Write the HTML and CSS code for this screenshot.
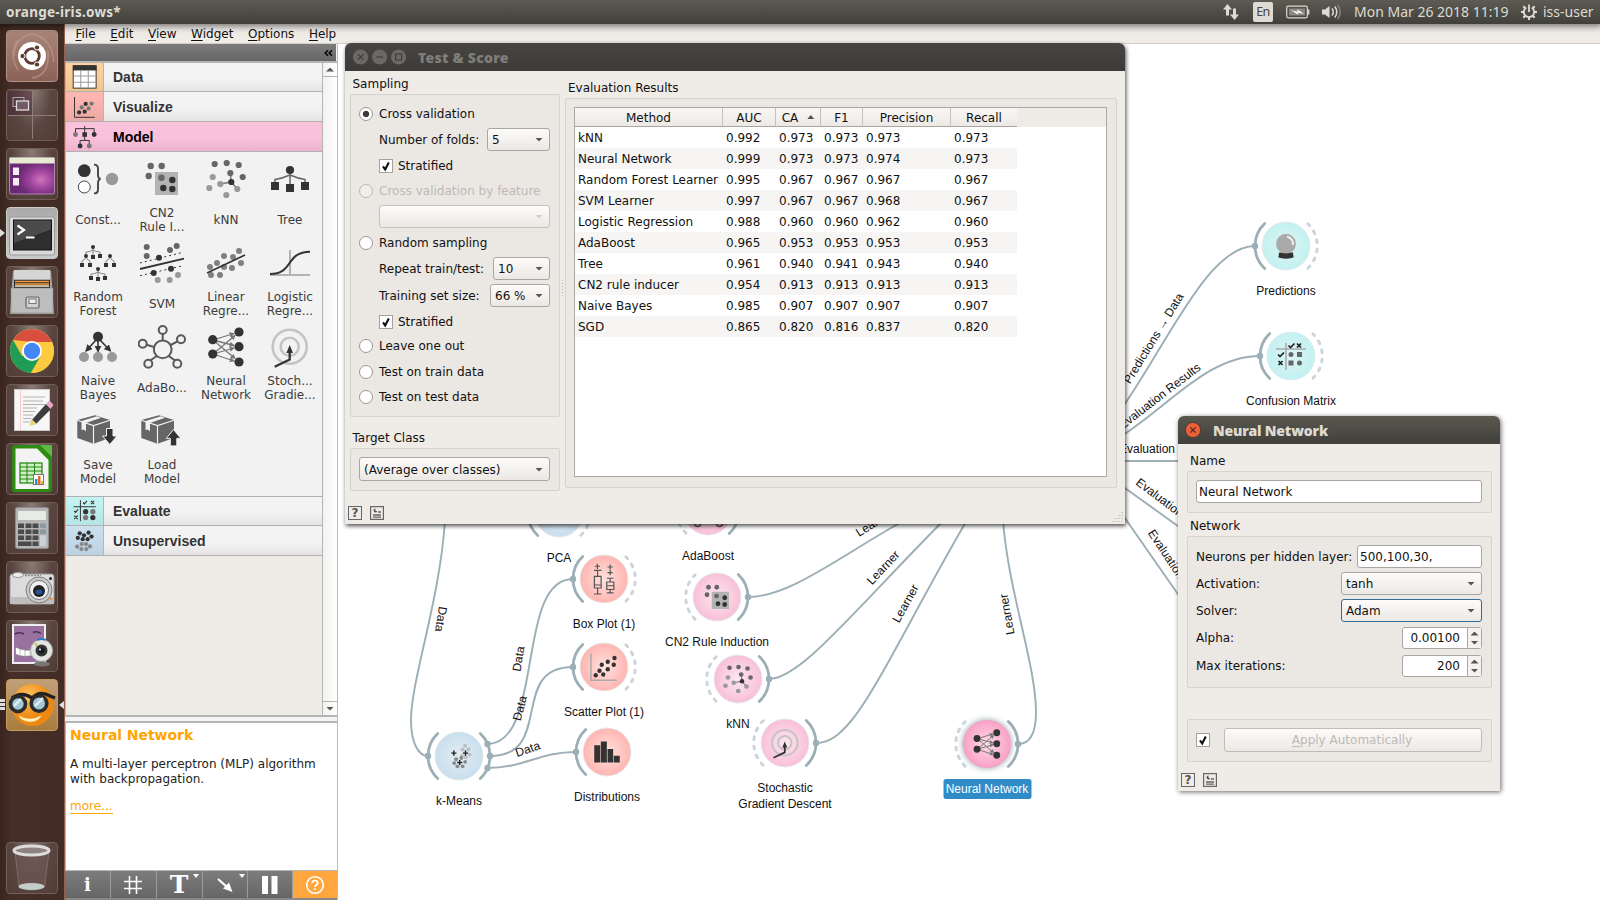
FILE: index.html
```html
<!DOCTYPE html>
<html lang="en">
<head>
<meta charset="utf-8">
<title>orange-iris.ows*</title>
<link rel="stylesheet" href="styles.css">
</head>
<body>
<svg class="defs" width="0" height="0">
  <defs>
    <radialGradient id="gPink"><stop offset="0" stop-color="#fde6ef"/><stop offset="1" stop-color="#f9bfd8"/></radialGradient>
    <radialGradient id="gHot"><stop offset="0" stop-color="#fddbe7"/><stop offset="1" stop-color="#f9a0c5"/></radialGradient>
    <radialGradient id="gRed"><stop offset="0" stop-color="#ffe2df"/><stop offset="1" stop-color="#ffb5b0"/></radialGradient>
    <radialGradient id="gBlue"><stop offset="0" stop-color="#e4edf2"/><stop offset="1" stop-color="#c8dfee"/></radialGradient>
    <radialGradient id="gTeal"><stop offset="0" stop-color="#dcf5f4"/><stop offset="1" stop-color="#c3f1f1"/></radialGradient>
    <marker id="ah" viewBox="0 0 6 6" refX="5" refY="3" markerWidth="4" markerHeight="4" orient="auto"><path d="M0 0L6 3L0 6z" fill="#777"/></marker>
    <marker id="ad" viewBox="0 0 6 6" refX="5" refY="3" markerWidth="4.5" markerHeight="4.5" orient="auto"><path d="M0 0L6 3L0 6z" fill="#333"/></marker>

    <path id="arcR" d="M21.3 -22.5A31 31 0 0 1 21.3 22.5" fill="none" stroke="#9caeb6" stroke-width="2.8" stroke-linecap="round"/>
    <path id="arcL" d="M-21.3 -22.5A31 31 0 0 0 -21.3 22.5" fill="none" stroke="#9caeb6" stroke-width="2.8" stroke-linecap="round"/>
    <path id="dashR" d="M21.8 -22.3A31 31 0 0 1 21.8 22.3" fill="none" stroke="#cbd5d9" stroke-width="2.9" stroke-linecap="round" stroke-dasharray="2.8 6.500"/>
    <path id="dashL" d="M-21.8 -22.3A31 31 0 0 0 -21.8 22.3" fill="none" stroke="#cbd5d9" stroke-width="2.9" stroke-linecap="round" stroke-dasharray="2.8 6.500"/>

    <symbol id="i-const" viewBox="0 0 48 48"><circle cx="10.3" cy="15.7" r="6.4" fill="#333"/><circle cx="10.3" cy="32" r="6" fill="#fff" stroke="#333" stroke-width=".9"/><path d="M20 9.6q4 0 4 4v6q0 4 2.6 4.4q-2.6 .4-2.6 4.4v6q0 4-4 4" fill="none" stroke="#444" stroke-width="1.9"/><circle cx="38" cy="24" r="6.2" fill="#999"/></symbol>
    <symbol id="i-cn2" viewBox="0 0 48 48"><rect x="17" y="17" width="23" height="23" fill="#b3b3b3"/><g fill="#666"><circle cx="12.7" cy="11" r="3.2"/><circle cx="23.7" cy="11" r="3.2"/><circle cx="10.7" cy="21" r="3.2"/><circle cx="23.4" cy="22.8" r="3.2"/></g><g fill="#333"><circle cx="34.3" cy="25" r="3.2"/><circle cx="25.3" cy="33" r="3.2"/><circle cx="34.3" cy="34" r="3.2"/></g></symbol>
    <symbol id="i-knn" viewBox="0 0 48 48"><path d="M29.3 27L28.3 18M29.3 27L18.3 29M29.3 27L35.3 34" stroke="#777" stroke-width="1.5"/><g fill="#666"><circle cx="12.7" cy="9" r="3.1"/><circle cx="24.7" cy="8" r="3.1"/><circle cx="36.7" cy="10" r="3.1"/><circle cx="40.7" cy="22" r="3.1"/><circle cx="28.3" cy="18" r="3.1"/></g><g fill="#999"><circle cx="10.7" cy="22" r="3.1"/><circle cx="18.3" cy="29" r="3.1"/><circle cx="7.3" cy="33" r="3.1"/><circle cx="35.3" cy="34" r="3.1"/><circle cx="24.3" cy="40" r="3.1"/></g><circle cx="29.3" cy="27" r="3.1" fill="#333"/></symbol>
    <symbol id="i-tree" viewBox="0 0 48 48"><path d="M24 15V30M9 28V24.5Q16 23.5 24 20Q32 23.5 39 24.5V28" fill="none" stroke="#666" stroke-width="1.5"/><g fill="#333"><circle cx="24" cy="15" r="4.1"/><path d="M5 27h8v8h-8zM20 29h8v8h-8zM35 27h8v8h-8z"/></g></symbol>
    <symbol id="i-forest" viewBox="0 0 48 48"><path d="M19 8V17M12 17V13Q16 13 19 11Q22 13 26 13V16M8 25V22Q11 21 12 18Q13 21 16 22V25M32 25V22Q35 21 36 18Q37 21 40 22V25M24 30V39M17 38V35Q21 35 24 33Q27 35 31 35V38" fill="none" stroke="#777" stroke-width=".9"/><g fill="#333"><circle cx="19" cy="8" r="2"/><circle cx="12" cy="17" r="2"/><circle cx="36" cy="17" r="2"/><circle cx="24" cy="30" r="2"/><path d="M17 16h4v4h-4zM24 15h4v4h-4zM6 24h4v4h-4zM14 24h4v4h-4zM30 24h4v4h-4zM38 24h4v4h-4zM15 37h4v4h-4zM22 38h4v4h-4zM29 37h4v4h-4z"/></g></symbol>
    <symbol id="i-svm" viewBox="0 0 48 48"><path d="M2 30L46 19.7" stroke="#333" stroke-width="1.8"/><path d="M2 24L45 13.3M2 36.7L45 26.7" stroke="#333" stroke-width="1" stroke-dasharray="2 3"/><g fill="#666"><circle cx="8.7" cy="8" r="3"/><circle cx="8.7" cy="17" r="3"/><circle cx="32" cy="11" r="3"/><circle cx="38.7" cy="7" r="3"/></g><g fill="#333"><circle cx="21" cy="18.7" r="3"/><circle cx="15.7" cy="34" r="3"/><circle cx="33" cy="29.7" r="3"/></g><g fill="#999"><circle cx="19.7" cy="41" r="3"/><circle cx="31.7" cy="41" r="3"/><circle cx="40" cy="36" r="3"/></g></symbol>
    <symbol id="i-linear" viewBox="0 0 48 48"><g fill="#808080"><circle cx="37" cy="12" r="3"/><circle cx="22" cy="17" r="3"/><circle cx="31" cy="18" r="3"/><circle cx="39" cy="24" r="3"/><circle cx="30" cy="29" r="3"/><circle cx="15" cy="24" r="3"/><circle cx="8" cy="28" r="3"/><circle cx="22" cy="28" r="3"/><circle cx="9" cy="36" r="3"/><circle cx="18" cy="36" r="3"/></g><path d="M5 34L43 16" stroke="#333" stroke-width="1.7"/></symbol>
    <symbol id="i-logistic" viewBox="0 0 48 48"><path d="M24 11V36M4 36H44" stroke="#b3b3b3" stroke-width="2"/><path d="M4 35C28 35 19 13 44 12.7" fill="none" stroke="#333" stroke-width="1.9"/></symbol>
    <symbol id="i-bayes" viewBox="0 0 48 48"><g stroke="#333" stroke-width="1.6"><path d="M22 17L12 28" marker-end="url(#ad)"/><path d="M24 17V28.5" marker-end="url(#ad)"/><path d="M26 17L36.5 28" marker-end="url(#ad)"/></g><circle cx="24" cy="13.7" r="5" fill="#333"/><g fill="#999"><circle cx="10" cy="34" r="5"/><circle cx="24" cy="34" r="5"/><circle cx="38" cy="34" r="5"/></g></symbol>
    <symbol id="i-ada" viewBox="0 0 48 48"><g fill="none" stroke="#595959" stroke-width="2"><circle cx="24.7" cy="26.3" r="8.9"/><circle cx="24.7" cy="7" r="4"/><circle cx="43" cy="16.3" r="4"/><circle cx="39.3" cy="40.7" r="4"/><circle cx="10.3" cy="40.7" r="4"/><circle cx="4.7" cy="20.7" r="4"/><path d="M24.7 11V17M39.5 18.3L32.7 22M37 37.3L30.6 33M12.6 37.3L18.8 33M8.6 21.8L15.9 24"/></g></symbol>
    <symbol id="i-nn" viewBox="0 0 48 48"><g stroke="#777" stroke-width="1.3"><path d="M11 17L32 10.5" marker-end="url(#ah)"/><path d="M11 17L32 22.5" marker-end="url(#ah)"/><path d="M11 17L33 35.5" marker-end="url(#ah)"/><path d="M11 31L33 12.5" marker-end="url(#ah)"/><path d="M11 31L32 25" marker-end="url(#ah)"/><path d="M11 31L32 38" marker-end="url(#ah)"/></g><g fill="#333"><circle cx="10.7" cy="16.7" r="4.6"/><circle cx="10.7" cy="31" r="4.6"/><circle cx="37" cy="9" r="4.6"/><circle cx="37" cy="23.7" r="4.6"/><circle cx="37" cy="39" r="4.6"/></g></symbol>
    <symbol id="i-sgd" viewBox="0 0 48 48"><g fill="none" stroke="#c4c4c4" stroke-width="2.6"><circle cx="23.7" cy="23.7" r="17"/><circle cx="23.7" cy="23.7" r="9"/></g><path d="M8.7 43.7L23.7 36.5V28" fill="none" stroke="#333" stroke-width="2.3"/><path d="M23.7 22L20.4 30H27z" fill="#333"/></symbol>
    <symbol id="i-box" viewBox="0 0 48 48"><path d="M3.3 13L21 8.3L36 13V31L19.5 36.7L3.3 31z" fill="#666"/><path d="M3.3 13.3L19.5 18.5L36 13.3M19.5 18.5V36.7" fill="none" stroke="#f2f2f2" stroke-width="1.2"/><path d="M7.5 14L23 9.3L27 10.7L12 16V24.5L10 22.5L7.5 23z" fill="#f2f2f2"/></symbol>
    <symbol id="i-kmeans" viewBox="0 0 48 48"><g fill="#bcbfc1"><circle cx="32" cy="8" r="3"/><circle cx="28" cy="14" r="3"/><circle cx="37" cy="14" r="3"/><circle cx="27" cy="24" r="3"/><circle cx="39" cy="22" r="3"/><circle cx="33" cy="26" r="3"/></g><g fill="#888"><circle cx="18" cy="29" r="3"/><circle cx="26" cy="27" r="3"/><circle cx="32" cy="33" r="3"/><circle cx="15" cy="35" r="3"/><circle cx="20" cy="40" r="3"/><circle cx="28" cy="40" r="3"/></g><path d="M10.5 19.500h8M14.500 15.500v8M28.500 19.500h8M32.500 15.500v8M19.500 34h8M23.500 30v8" stroke="#222" stroke-width="2.200"/></symbol>
    <symbol id="i-boxplot" viewBox="0 0 48 48"><g fill="none" stroke="#555" stroke-width="1.6"><path d="M9 7h7M12.500 3.500v7M8 12.500h10M12.800 12.500v8M8.500 20.500h9v15.500h-9zM8.500 32h9M12.800 36v8M8 44h10M26 8h7M29.500 4.500v7M26 15.500h7M29.500 12v7M25 23h9M29.500 23v5M25 28h9.500v10h-9.500zM25 33h9.500M29.500 38v4.500M25 42.500h9"/></g></symbol>
    <symbol id="i-scatter" viewBox="0 0 48 48"><path d="M6.5 6V41.5H41" fill="none" stroke="#aaa" stroke-width="2"/><g fill="#333"><circle cx="38" cy="12" r="2.9"/><circle cx="29" cy="17" r="2.9"/><circle cx="37" cy="21" r="2.9"/><circle cx="21" cy="21" r="2.9"/><circle cx="29" cy="27" r="2.9"/><circle cx="18" cy="29" r="2.9"/><circle cx="13" cy="35" r="2.9"/><circle cx="23" cy="34" r="2.9"/></g></symbol>
    <symbol id="i-dist" viewBox="0 0 48 48"><path d="M7 15h8v23H7zM15.8 10h8v28h-8zM24.7 20h7.5v18h-7.5zM33 29h8v9h-8z" fill="#333"/></symbol>
    <symbol id="i-report" viewBox="0 0 14 14"><rect x=".6" y=".6" width="12.8" height="12.8" fill="#efebe6" stroke="#666" stroke-width="1.2"/><path d="M3 9h8M3 11.200h8M8 6h3" stroke="#666" stroke-width="1.300"/><path d="M5.500 2.500A2 2 0 1 0 7.300 5.500L5.300 4.500z" fill="#555"/></symbol>
  </defs>
</svg>

<header class="topbar">
  <span class="app-title">orange-iris.ows*</span>
  <div class="tray">
    <svg class="tray-net" width="18" height="18" viewBox="0 0 18 18"><path d="M5.5 1L10 6.5H7V12.5H4V6.5H1zM12.5 17L17 11.5H14V5.5H11V11.5H8z" fill="#dfdbd2"/></svg>
    <span class="lang">En</span>
    <svg class="tray-bat" width="24" height="14" viewBox="0 0 24 14"><rect x=".7" y="1.2" width="20.6" height="11.6" rx="1.5" fill="none" stroke="#dfdbd2" stroke-width="1.2"/><rect x="3" y="3.5" width="16" height="7" fill="#8b8982"/><path d="M22.6 4.5v5" stroke="#dfdbd2" stroke-width="1.5"/><path d="M5 5L12 7L11 4L18 9L11.5 7.5L12.5 10z" fill="#fff"/></svg>
    <svg class="tray-vol" width="20" height="18" viewBox="0 0 20 18"><path d="M0 6.5H3L7.5 3V15L3 11.5H0z" fill="#dfdbd2"/><path d="M10 5.5q2.5 3.5 0 7M12.8 3.5q4 5.5 0 11" fill="none" stroke="#dfdbd2" stroke-width="1.5"/><path d="M15.5 1.8q5.5 7.2 0 14.4" fill="none" stroke="#85837b" stroke-width="1.5"/></svg>
    <span class="clock">Mon Mar 26 2018 11:19</span>
    <svg class="tray-cog" width="16" height="16" viewBox="0 0 16 16"><path d="M5.3 3.5A5.2 5.2 0 1 0 10.7 3.5" fill="none" stroke="#dfdbd2" stroke-width="1.9"/><path d="M8 .5V8" stroke="#dfdbd2" stroke-width="1.8"/><path d="M8 13v3M0 8h3M13 8h3M2.3 2.3l2 2M13.7 2.3l-2 2M2.3 13.7l2-2M13.7 13.7l-2-2" stroke="#dfdbd2" stroke-width="2"/></svg>
    <span class="user">iss-user</span>
  </div>
</header>

<div class="desktop">
  <nav class="launcher">
    <div class="tile t-dash"><svg viewBox="0 0 52 52"><path d="M8 26Q8 8 26 4Q46 8 48 32M12 40Q2 24 12 10M26 48Q44 46 42 20" fill="none" stroke="#c2a097" stroke-width="1.5" opacity=".6"/><circle cx="26" cy="26" r="14" fill="#fff"/><circle cx="26" cy="26" r="7.3" fill="none" stroke="#5b3a30" stroke-width="2.8"/><g fill="#5b3a30" stroke="#fff" stroke-width="1"><circle cx="16.5" cy="26" r="2.6"/><circle cx="31" cy="17.5" r="2.6"/><circle cx="31" cy="34.5" r="2.6"/></g></svg></div>
    <div class="tile"><svg viewBox="0 0 52 52"><path d="M2 26.5H50M26.5 2V50" stroke="#8f7e78"/><path d="M2 2h24v24H2z" fill="#4a2637" opacity=".5"/><rect x="7" y="8.5" width="11" height="9" fill="none" stroke="#aaa" stroke-width="1"/><rect x="10.5" y="12" width="12" height="9" fill="#735a66" stroke="#ddd" stroke-width="1.3"/></svg></div>
    <div class="tile"><svg viewBox="0 0 52 52"><defs><radialGradient id="desk" cx=".7" cy=".6"><stop offset="0" stop-color="#cf74b8"/><stop offset=".5" stop-color="#9f449d"/><stop offset="1" stop-color="#6b2a74"/></radialGradient></defs><rect x="3.5" y="10" width="45" height="36" rx="1.5" fill="url(#desk)" stroke="#cfa0d8" stroke-width=".7"/><rect x="3.5" y="9.5" width="45" height="6" fill="#e9ead2"/><path d="M7 19.500h6v7.500H7zM7 30h6v7.500H7z" fill="#f4edf4"/></svg></div>
    <div class="tile t-light"><svg viewBox="0 0 52 52"><rect x="3.5" y="10" width="45" height="38" rx="2" fill="#d8d8d8" stroke="#999"/><rect x="7.5" y="13" width="38" height="30" fill="#2e2e2e" stroke="#111"/><path d="M8 13.5h37v9L8 36z" fill="#4b4b4b"/><path d="M11.5 18.5L18 23L11.5 27.5" fill="none" stroke="#fff" stroke-width="2.2"/><path d="M20 30.5h8.5" stroke="#fff" stroke-width="2"/></svg></div>
    <div class="tile"><svg viewBox="0 0 52 52"><path d="M7 5h38l3 43H4z" fill="#a8a8a8"/><path d="M8 4h36v9H8z" fill="#d5d5d5"/><rect x="8" y="14" width="36" height="9" fill="#2c2c2c"/><path d="M9 15.5h34M9 18h34" stroke="#f29a45" stroke-width="1.5"/><path d="M9 20h34" stroke="#fbe6c4" stroke-width="1.5"/><path d="M5 22h42v25H5z" fill="#bdbdbd" stroke="#888" stroke-width=".6"/><rect x="20" y="31" width="13" height="11" rx="1.5" fill="#d0d0d0" stroke="#666" stroke-width="1.2"/><rect x="23" y="33" width="7" height="4.5" fill="#eee" stroke="#777"/></svg></div>
    <div class="tile"><svg viewBox="0 0 52 52"><circle cx="26" cy="26" r="22" fill="#f9c83c"/><path d="M7 15A22 22 0 0 1 46 17H26z" fill="#d94f3f"/><path d="M7 15A22 22 0 0 0 25 48L34.5 31L16 31z" fill="#1f9d57"/><path d="M25 48A22 22 0 0 0 46 17H26L36 30z" fill="#fdcb3f"/><circle cx="26" cy="26" r="10" fill="#fff"/><circle cx="26" cy="26" r="8.2" fill="#4486f4"/></svg></div>
    <div class="tile"><svg viewBox="0 0 52 52"><rect x="8.5" y="5.5" width="35" height="41" fill="#f7f7f7" stroke="#c9c9c9"/><path d="M14.5 6v40" stroke="#f6cccc"/><path d="M17 13h22M17 17h20M17 20.5h22M17 24h14M17 27.5h12M17 31h10M17 34.5h8M17 38h7" stroke="#aaa" stroke-width=".9"/><path d="M25 37L40 20L45 25L30 40z" fill="#3d3d3d"/><path d="M23.500 42l2-7l5.500 5z" fill="#e8d580"/><path d="M40 20l3.500-3.500l4 4.500l-3 4z" fill="#e9a6cb"/></svg></div>
    <div class="tile"><svg viewBox="0 0 52 52"><path d="M9 2H35L46 14V46Q46 49 43 49H9Q6 49 6 46V5Q6 2 9 2z" fill="#2d8b12"/><path d="M34 2h12v12z" fill="#60b844"/><path d="M9.5 5.5H31L42.5 17V46H9.5z" fill="#f3f3f3"/><rect x="14" y="20" width="22" height="20" fill="#cdf0c6" stroke="#20820f" stroke-width="1.2"/><path d="M14 24h22M14 28h22M14 32h22M14 36h22M21 20v20M28.5 20v20" stroke="#20820f"/><rect x="27.5" y="31.5" width="10" height="10" fill="#fff" stroke="#777"/><path d="M29 36h2.5v5h-2.5z" fill="#2d8fd0"/><path d="M32 33h2.5v8H32z" fill="#e06a20"/><path d="M35 38h2v3h-2z" fill="#f0c020"/></svg></div>
    <div class="tile"><svg viewBox="0 0 52 52"><rect x="9.5" y="5.5" width="33" height="41" rx="2" fill="#b5b5b5" stroke="#8c8c8c"/><rect x="12" y="9" width="28" height="9" rx="1" fill="#e7ebe6"/><g fill="#4b4b4b"><path d="M12 21.5h6v4.5h-6zM19.5 21.5h6v4.5h-6zM26.5 21.5h6v4.5h-6zM12 27.5h6v4.5h-6zM19.5 27.5h6v4.5h-6zM26.5 27.5h6v4.5h-6zM12 33.5h6v4.5h-6zM19.5 33.5h6v4.5h-6zM26.5 33.5h6v4.5h-6zM12 39.5h13.5v4.5H12zM26.5 39.5h6v4.5h-6z"/></g><path d="M34 21.5h6v4.5h-6zM34 27.5h6v4.5h-6z" fill="#8a9aa5"/><path d="M34 33.5h6v10.5h-6z" fill="#c9d2d7"/></svg></div>
    <div class="tile"><svg viewBox="0 0 52 52"><rect x="4" y="13" width="44" height="30" rx="2.5" fill="#dcdcdc" stroke="#999"/><path d="M4 36h44v7H4z" fill="#bdbdbd"/><ellipse cx="12" cy="14" rx="5.5" ry="2.5" fill="#eee" stroke="#999"/><path d="M19 14.5h16" stroke="#888" stroke-width="1.5" stroke-dasharray="2 1"/><circle cx="33" cy="29" r="13" fill="#c8c8c8" stroke="#808080"/><circle cx="33" cy="29" r="9.5" fill="#eee" stroke="#777"/><circle cx="33" cy="30" r="6" fill="#222"/><ellipse cx="33" cy="31" rx="3.5" ry="2.5" fill="#2354a0"/><circle cx="44.5" cy="17.5" r="1.5" fill="#222"/><rect x="43.5" y="37" width="3" height="2" fill="#f49820"/></svg></div>
    <div class="tile"><svg viewBox="0 0 52 52"><rect x="7" y="5" width="32" height="38" fill="#9a709f" stroke="#eee" stroke-width="2"/><path d="M9 14q4-2.5 9 0M27 12.5q4-2 8 1" fill="none" stroke="#4d2f55" stroke-width="1.5"/><path d="M9.5 27Q20 33 30 28V35Q16 38 9.5 34z" fill="#fff" stroke="#777" stroke-width=".6"/><path d="M14 29v7M19 30v6.500M24 30v6" stroke="#999" stroke-width=".6"/><circle cx="35.5" cy="30.5" r="11" fill="#e4e4e4" stroke="#aaa"/><circle cx="35.5" cy="30.5" r="6" fill="#35352f"/><circle cx="35.5" cy="30.5" r="3" fill="#0c1c2c"/><circle cx="34" cy="29.5" r="1" fill="#fff"/><circle cx="30" cy="24.5" r="1.5" fill="#c5d23c"/><path d="M31 20q4.5-2 9 0" stroke="#2f78c8" stroke-width="1.8" fill="none"/><ellipse cx="36" cy="44" rx="8" ry="2.5" fill="#777"/></svg></div>
    <div class="tile t-orange"><svg viewBox="0 0 52 52"><defs><radialGradient id="face" cx=".4" cy=".3"><stop offset="0" stop-color="#ffc560"/><stop offset="1" stop-color="#ee8813"/></radialGradient></defs><circle cx="26.5" cy="26" r="21" fill="url(#face)"/><path d="M6 19Q16 12 26 19Q34 11 44 17L49 19" fill="none" stroke="#222" stroke-width="3.5"/><g fill="#a4c6d5" stroke="#2b2b2b" stroke-width="3.6"><circle cx="12" cy="25" r="7.5"/><circle cx="33" cy="24.5" r="7.8"/></g><path d="M8 27l7-7M29 27l8-8" stroke="#dcebf0" stroke-width="2.5"/><path d="M12 36Q24 43 36 36Q32 43.5 24 43Q15 42.5 12 36z" fill="#fff3c8" stroke="#e4a022" stroke-width=".6"/></svg></div>
    <div class="tile t-trash"><svg viewBox="0 0 52 52"><path d="M9 9L13 45Q26 51 38.5 45L43 9z" fill="#6a5450" stroke="#857571" opacity=".8"/><ellipse cx="25.5" cy="44.5" rx="13" ry="3.5" fill="#c3ccc6"/><ellipse cx="25.5" cy="8.5" rx="17.5" ry="4.5" fill="#8d837f" stroke="#ddd" stroke-width="3"/></svg></div>
    <i class="pip pip-l p1"></i><i class="pip pip-l p2"></i><i class="pip pip-r"></i>
  </nav>

  <main class="app">
    <ul class="menubar"><li><u>F</u>ile</li><li><u>E</u>dit</li><li><u>V</u>iew</li><li><u>W</u>idget</li><li><u>O</u>ptions</li><li><u>H</u>elp</li></ul>
    <div class="work">
      <aside class="dock">
        <div class="dock-head"><svg width="9" height="6" viewBox="0 0 9 6"><path d="M4 .3L1.2 3L4 5.7M8 .3L5.2 3L8 5.7" fill="none" stroke="#000" stroke-width="1.5"/></svg></div>
        <div class="toolbox">
          <div class="cats">
            <div class="cat c-data"><span class="cico"><svg viewBox="198 189 113 84"><rect x="220" y="197" width="70" height="68" fill="#fff" stroke="#333" stroke-width="3"/><path d="M219 195h72v16h-72z" fill="#333"/><path d="M221 228h68M221 247h68M243 211v53M266 211v53" stroke="#999" stroke-width="3"/></svg></span>Data</div>
            <div class="cat c-vis"><span class="cico"><svg viewBox="198 277 113 84"><path d="M224 290V352H286" fill="none" stroke="#333" stroke-width="3"/><g fill="#333"><circle cx="258" cy="311" r="6.5"/><circle cx="267" cy="325" r="6.5" fill="#777"/><circle cx="276" cy="310" r="6.5" fill="#777"/><circle cx="246" cy="322" r="6.5" fill="#777"/><circle cx="255" cy="335" r="6.5"/><circle cx="238" cy="337" r="6.5"/></g></svg></span>Visualize</div>
            <div class="cat c-model"><span class="cico"><svg viewBox="198 367 113 84"><path d="M255 377V400M227 403V385H284V403M255 400V421M241 438V421H269V438" fill="none" stroke="#333" stroke-width="3"/><g fill="#333"><circle cx="227" cy="403" r="7.5" fill="#777"/><circle cx="284" cy="403" r="7.5"/><path d="M248 396h14v14h-14z"/><circle cx="241" cy="438" r="7.5"/><circle cx="269" cy="438" r="7.5" fill="#777"/></g></svg></span>Model</div>
            <div class="widgets">
              <div class="wg"><svg><use href="#i-const"/></svg><p>Const...</p></div>
              <div class="wg"><svg><use href="#i-cn2"/></svg><p>CN2<br>Rule I...</p></div>
              <div class="wg"><svg><use href="#i-knn"/></svg><p>kNN</p></div>
              <div class="wg"><svg><use href="#i-tree"/></svg><p>Tree</p></div>
              <div class="wg"><svg><use href="#i-forest"/></svg><p>Random<br>Forest</p></div>
              <div class="wg"><svg><use href="#i-svm"/></svg><p>SVM</p></div>
              <div class="wg"><svg><use href="#i-linear"/></svg><p>Linear<br>Regre...</p></div>
              <div class="wg"><svg><use href="#i-logistic"/></svg><p>Logistic<br>Regre...</p></div>
              <div class="wg"><svg><use href="#i-bayes"/></svg><p>Naive<br>Bayes</p></div>
              <div class="wg"><svg><use href="#i-ada"/></svg><p>AdaBo...</p></div>
              <div class="wg"><svg><use href="#i-nn"/></svg><p>Neural<br>Network</p></div>
              <div class="wg"><svg><use href="#i-sgd"/></svg><p>Stoch...<br>Gradie...</p></div>
              <div class="wg"><svg viewBox="0 0 48 48"><use href="#i-box"/><path d="M32.5 21.5h6.5v7.500h4L35.8 37.5L28.5 29h4z" fill="#333" stroke="#f2f2f2"/></svg><p>Save<br>Model</p></div>
              <div class="wg"><svg viewBox="0 0 48 48"><use href="#i-box"/><path d="M32.3 38.900h6.5v-7.500h4L35.500 22.500L28.300 31.400h4z" fill="#333" stroke="#f2f2f2"/></svg><p>Load<br>Model</p></div>
            </div>
            <div class="cat c-eval"><span class="cico"><svg viewBox="198 591 113 84"><path d="M221 620H289M242 600V664" stroke="#333" stroke-width="3"/><path d="M250 607l4 4l8-9M223 633l4 4l8-9M274 602l10 10M284 602l-10 10M223 647l11 11M234 647l-11 11" fill="none" stroke="#333" stroke-width="3.5"/><circle cx="258" cy="635" r="8" fill="#333"/><circle cx="280" cy="635" r="8" fill="#777"/><circle cx="258" cy="653" r="8" fill="#777"/><circle cx="280" cy="653" r="8" fill="#333"/></svg></span>Evaluate</div>
            <div class="cat c-uns"><span class="cico"><svg viewBox="198 679 113 84"><g fill="#333"><circle cx="240" cy="699" r="6.500"/><circle cx="253" cy="705" r="6.500"/><circle cx="267" cy="697" r="6.500"/><circle cx="234" cy="713" r="6.500"/><circle cx="249" cy="717" r="6.500"/><circle cx="264" cy="717" r="6.500"/><circle cx="276" cy="709" r="6.500"/></g><g fill="#888"><circle cx="246" cy="732" r="6.500"/><circle cx="259" cy="732" r="6.500"/><circle cx="232" cy="740" r="6.500"/><circle cx="271" cy="739" r="6.500"/><circle cx="245" cy="747" r="6.500"/><circle cx="260" cy="747" r="6.500"/></g></svg></span>Unsupervised</div>
          </div>
          <div class="scroll"><span class="sb"><i class="tri up"></i></span><span class="sb"><i class="tri"></i></span></div>
        </div>
        <div class="splitter"></div>
        <div class="info"><h3>Neural Network</h3><p>A multi-layer perceptron (MLP) algorithm<br>with backpropagation.</p><a>more...</a></div>
        <div class="dock-tools">
          <span class="dt serif-i">i</span>
          <span class="dt shift"><svg width="20" height="20" viewBox="0 0 20 20"><path d="M6.5 1V19M13.5 1V19M1 6.5H19M1 13.5H19" stroke="#fff" stroke-width="1.6"/></svg></span>
          <span class="dt serif-t">T<i class="tri w"></i></span>
          <span class="dt"><svg width="18" height="18" viewBox="0 0 18 18"><path d="M2 3L11 11" stroke="#fff" stroke-width="2.2"/><path d="M16.5 16L7 12.500L13 6.500z" fill="#fff"/></svg><i class="tri w"></i></span>
          <span class="dt"><svg width="16" height="20" viewBox="0 0 16 20"><path d="M0 1h6v18H0zM9.5 1h6v18h-6z" fill="#fff"/></svg></span>
          <span class="dt help"><svg width="20" height="20" viewBox="0 0 20 20"><circle cx="10" cy="10" r="8.3" fill="none" stroke="#fff" stroke-width="1.6"/><path d="M7.3 8Q7.3 5.5 10 5.5T12.7 8Q12.7 9.5 11 10.2Q10 10.8 10 12M10 13.2V15" fill="none" stroke="#fff" stroke-width="1.7"/></svg></span>
        </div>
      </aside>

      <svg class="canvas" width="1262" height="856" viewBox="338 44 1262 856">
        <g class="link">
          <path d="M445 520C440 600 411 680 411 720C411 744 419 756 428 756"/>
          <path d="M487 744C545 744 515 579 573 579"/>
          <path d="M490 756C555 756 508 667 573 667"/>
          <path d="M487 768C525 768 538 752 576 752"/>
          <path d="M748 597C790 597 840 556 905 520"/>
          <path d="M769 679C800 679 850 615 944 520"/>
          <path d="M816 743C855 743 882 667 967 520"/>
          <path d="M1018 744C1029 744 1036 735 1036 712C1036 665 1008 590 1003 520"/>
          <path d="M1120 411C1168 343 1208 246 1255 246"/>
          <path d="M1120 437C1170 405 1208 356 1260 356"/>
          <path d="M1120 461H1180M1120 484.4L1182 529M1120 511L1182 600"/>
        </g>
        <g class="dots"><circle cx="428" cy="756" r="3.2"/><circle cx="487.5" cy="744" r="3.2"/><circle cx="490" cy="756" r="3.2"/><circle cx="487.5" cy="768" r="3.2"/><circle cx="573" cy="579" r="3.2"/><circle cx="573" cy="667" r="3.2"/><circle cx="576" cy="752" r="3.2"/><circle cx="748" cy="597" r="3.2"/><circle cx="769" cy="679" r="3.2"/><circle cx="816" cy="743" r="3.2"/><circle cx="1018" cy="744" r="3.2"/><circle cx="1255" cy="246" r="3.2"/><circle cx="1260" cy="356" r="3.2"/></g>
        <g class="ltext">
          <text transform="translate(1130 384.500) rotate(-58.500)">Predictions → Data</text>
          <text transform="translate(1201.5 369) rotate(-37.5)" text-anchor="end">Evaluation Results</text>
          <text x="1119" y="453">Evaluation Results</text>
          <text transform="translate(1135 484) rotate(37)">Evaluation Results</text>
          <text transform="translate(1147.5 533) rotate(56.5)">Evaluation Results</text>
          <text transform="translate(439 606) rotate(99)">Data</text>
          <text transform="translate(520.5 672) rotate(-81)">Data</text>
          <text transform="translate(520.5 721.5) rotate(-75)">Data</text>
          <text transform="translate(517 757) rotate(-19)">Data</text>
          <text transform="translate(859 537) rotate(-32)">Learner</text>
          <text transform="translate(872 585.5) rotate(-47)">Learner</text>
          <text transform="translate(899 623.5) rotate(-61)">Learner</text>
          <text transform="translate(1014.500 634) rotate(-100)">Learner</text>
        </g>
        <g transform="translate(1286 246)"><circle class="nd" r="24" fill="url(#gTeal)"/><use href="#arcL"/><use href="#dashR"/><path d="M-7 6.5h14l.5 5H-7.5z" fill="#333"/><ellipse cy="10.5" rx="7.5" ry="2.2" fill="#333"/><circle cy="-2.3" r="9.9" fill="#aaa"/><path d="M1-9.500Q7.500-7.500 7 -1" stroke="#eee" stroke-width="2" fill="none"/></g>
        <g transform="translate(1291 356)"><circle class="nd" r="24" fill="url(#gTeal)"/><use href="#arcL"/><use href="#dashR"/><path d="M-15-7H15M-5-13V14" stroke="#aaa" stroke-width="1.6"/><path d="M-2.5-10.5l2 2l4-4M-13-1.5l2 2l4-4M6-12.5l4 4M10-12.5l-4 4M-12.5 5l4 4M-8.5 5l-4 4" stroke="#222" stroke-width="1.7" fill="none"/><g fill="#666"><circle cy="-1.5" r="2.5"/><path d="M6-4h5v5H6zM-2.5 4.5h5v5h-5z"/><circle cx="8.5" cy="7" r="2.5"/></g></g>
        <g transform="translate(559 513)"><circle class="nd" r="24" fill="url(#gBlue)"/><use href="#arcL"/><use href="#dashR"/></g>
        <g transform="translate(604 579)"><circle class="nd" r="24" fill="url(#gRed)"/><use href="#arcL"/><use href="#dashR"/><use href="#i-boxplot" x="-16" y="-18" width="36" height="36"/></g>
        <g transform="translate(604 667)"><circle class="nd" r="24" fill="url(#gRed)"/><use href="#arcL"/><use href="#dashR"/><use href="#i-scatter" x="-18" y="-18" width="36" height="36"/></g>
        <g transform="translate(607 752)"><circle class="nd" r="24" fill="url(#gRed)"/><use href="#arcL"/><use href="#i-dist" x="-18" y="-18" width="36" height="36"/></g>
        <g transform="translate(459 756)"><circle class="nd" r="24" fill="url(#gBlue)"/><use href="#arcL"/><use href="#arcR"/><use href="#i-kmeans" x="-14.5" y="-15.500" width="31" height="31"/></g>
        <g transform="translate(708 511)"><circle class="nd" r="24" fill="url(#gPink)"/><use href="#arcR"/><use href="#dashL"/><use href="#i-ada" x="-18" y="-18" width="36" height="36"/></g>
        <g transform="translate(717 597)"><circle class="nd" r="24" fill="url(#gPink)"/><use href="#arcR"/><use href="#dashL"/><use href="#i-cn2" x="-18" y="-18" width="36" height="36"/></g>
        <g transform="translate(738 679)"><circle class="nd" r="24" fill="url(#gPink)"/><use href="#arcR"/><use href="#dashL"/><use href="#i-knn" x="-18" y="-18" width="36" height="36"/></g>
        <g transform="translate(785 743)"><circle class="nd" r="24" fill="url(#gPink)"/><use href="#arcR"/><use href="#dashL"/><use href="#i-sgd" x="-18" y="-18" width="36" height="36"/></g>
        <g transform="translate(987 744)"><circle class="nd sel" r="24" fill="url(#gHot)"/><use href="#arcR"/><use href="#dashL"/><use href="#i-nn" x="-18" y="-18" width="36" height="36"/></g>
        <rect x="943.5" y="779" width="88" height="20" rx="2.5" fill="#308cc6"/>
        <g class="nlabel">
          <text x="1286" y="295">Predictions</text><text x="1291" y="405">Confusion Matrix</text>
          <text x="559" y="562">PCA</text><text x="604" y="628">Box Plot (1)</text><text x="604" y="716">Scatter Plot (1)</text><text x="607" y="801">Distributions</text><text x="459" y="805">k-Means</text>
          <text x="708" y="560">AdaBoost</text><text x="717" y="646">CN2 Rule Induction</text><text x="738" y="728">kNN</text><text x="785" y="792">Stochastic</text><text x="785" y="808">Gradient Descent</text>
          <text class="on" x="987" y="793">Neural Network</text>
        </g>
      </svg>
    </div>
  </main>
</div>

<section class="win score">
  <div class="titlebar off">
    <svg width="54" height="16" viewBox="0 0 54 16"><g fill="#6b6964"><circle cx="7.6" cy="8" r="7.6"/><circle cx="26.6" cy="8" r="7.6"/><circle cx="45.6" cy="8" r="7.6"/></g><path d="M4.8 5.2l5.6 5.6M10.4 5.2l-5.6 5.6M23.2 8h7M42.6 5h6v6h-6z" fill="none" stroke="#3c3b37" stroke-width="1.2"/></svg>
    <b>Test &amp; Score</b>
  </div>
  <div class="score-body">
    <div class="left">
      <label class="cap">Sampling</label>
      <div class="group sampling">
        <div class="row"><i class="radio on"></i>Cross validation</div>
        <div class="row sub">Number of folds:<span class="combo w63">5<i class="tri"></i></span></div>
        <div class="row sub"><i class="check"><svg viewBox="0 0 14 14"><path d="M4 7.3L6.2 10.5L9.8 3.5" fill="none" stroke="#111" stroke-width="2.1"/></svg></i>Stratified</div>
        <div class="row dis"><i class="radio"></i>Cross validation by feature</div>
        <div class="row sub dis"><span class="combo full"><i class="tri"></i></span></div>
        <div class="row"><i class="radio"></i>Random sampling</div>
        <div class="row sub">Repeat train/test:<span class="combo w57">10<i class="tri"></i></span></div>
        <div class="row sub">Training set size:<span class="combo w60">66 %<i class="tri"></i></span></div>
        <div class="row sub"><i class="check"><svg viewBox="0 0 14 14"><path d="M4 7.3L6.2 10.5L9.8 3.5" fill="none" stroke="#111" stroke-width="2.1"/></svg></i>Stratified</div>
        <div class="row"><i class="radio"></i>Leave one out</div>
        <div class="row"><i class="radio"></i>Test on train data</div>
        <div class="row"><i class="radio"></i>Test on test data</div>
      </div>
      <label class="cap cap-target">Target Class</label>
      <div class="group target"><span class="combo full">(Average over classes)<i class="tri"></i></span></div>
      <div class="foot"><span class="q">?</span><svg width="14" height="14"><use href="#i-report"/></svg></div>
    </div>
    <div class="right">
      <label class="cap">Evaluation Results</label>
      <div class="group results">
        <div class="tablebox">
          <table>
            <colgroup><col class="c1"><col class="c2"><col class="c3"><col class="c4"><col class="c5"><col class="c6"></colgroup>
            <thead><tr><th>Method</th><th>AUC</th><th class="sorted">CA<i class="tri up"></i></th><th>F1</th><th>Precision</th><th>Recall</th></tr></thead>
            <tbody>
            <tr><td>kNN</td><td>0.992</td><td>0.973</td><td>0.973</td><td>0.973</td><td>0.973</td></tr>
            <tr><td>Neural Network</td><td>0.999</td><td>0.973</td><td>0.973</td><td>0.974</td><td>0.973</td></tr>
            <tr><td>Random Forest Learner</td><td>0.995</td><td>0.967</td><td>0.967</td><td>0.967</td><td>0.967</td></tr>
            <tr><td>SVM Learner</td><td>0.997</td><td>0.967</td><td>0.967</td><td>0.968</td><td>0.967</td></tr>
            <tr><td>Logistic Regression</td><td>0.988</td><td>0.960</td><td>0.960</td><td>0.962</td><td>0.960</td></tr>
            <tr><td>AdaBoost</td><td>0.965</td><td>0.953</td><td>0.953</td><td>0.953</td><td>0.953</td></tr>
            <tr><td>Tree</td><td>0.961</td><td>0.940</td><td>0.941</td><td>0.943</td><td>0.940</td></tr>
            <tr><td>CN2 rule inducer</td><td>0.954</td><td>0.913</td><td>0.913</td><td>0.913</td><td>0.913</td></tr>
            <tr><td>Naive Bayes</td><td>0.985</td><td>0.907</td><td>0.907</td><td>0.907</td><td>0.907</td></tr>
            <tr><td>SGD</td><td>0.865</td><td>0.820</td><td>0.816</td><td>0.837</td><td>0.820</td></tr>
            </tbody>
          </table>
        </div>
      </div>
    </div>
  </div>
  <svg class="grip" width="12" height="12" viewBox="0 0 12 12"><path d="M10 1v1M10 4v1M7 4v1M10 7v1M7 7v1M4 7v1M10 10v1M7 10v1M4 10v1M1 10v1" stroke="#aaa6a0"/></svg>
  <i class="handle"></i>
</section>

<section class="win nnet">
  <div class="titlebar">
    <svg width="16" height="16" viewBox="0 0 16 16"><circle cx="8" cy="8" r="7.6" fill="#e9603a" stroke="#3a2a20" stroke-width=".6"/><path d="M5.4 5.4l5.2 5.2M10.6 5.4l-5.2 5.2" stroke="#4b2a1c" stroke-width="1.2"/></svg>
    <b>Neural Network</b>
  </div>
  <div class="nn-body">
    <label class="cap">Name</label>
    <div class="group name"><span class="field">Neural Network</span></div>
    <label class="cap cap-net">Network</label>
    <div class="group net">
      <div class="frow">Neurons per hidden layer:<span class="field w125">500,100,30,</span></div>
      <div class="frow">Activation:<span class="combo w141">tanh<i class="tri"></i></span></div>
      <div class="frow">Solver:<span class="combo w141 focus">Adam<i class="tri"></i></span></div>
      <div class="frow tall">Alpha:<span class="spin"><b>0.00100</b><span><i class="tri up"></i><i class="tri"></i></span></span></div>
      <div class="frow tall">Max iterations:<span class="spin"><b>200</b><span><i class="tri up"></i><i class="tri"></i></span></span></div>
    </div>
    <div class="group apply"><i class="check"><svg viewBox="0 0 14 14"><path d="M4 7.3L6.2 10.5L9.8 3.5" fill="none" stroke="#111" stroke-width="2.1"/></svg></i><span class="button"><span><u>A</u>pply Automatically</span></span></div>
    <div class="foot"><span class="q">?</span><svg width="14" height="14"><use href="#i-report"/></svg></div>
  </div>
</section>
</body>
</html>
```

FILE: styles.css
```css
* { box-sizing: border-box; }
html, body { margin: 0; width: 1600px; height: 900px; overflow: hidden; }
body { font: 12px/14px "DejaVu Sans", sans-serif; color: #111; background: #fff; display: flex; flex-direction: column; }
i { font-style: normal; }
p, h3, ul { margin: 0; padding: 0; }
.defs { position: absolute; }

.topbar { height: 24px; flex: none; display: flex; justify-content: space-between; align-items: center; padding: 0 6px 0 6px; background: linear-gradient(#5d5b52, #403f3a); color: #dfdbd2; font-family: "Noto Sans", sans-serif; box-shadow: 0 0 7px 2px rgba(0,0,0,.55); position: relative; z-index: 2; }
.app-title { font-weight: 700; font-size: 13.5px; letter-spacing: .28px; }
.tray { display: flex; align-items: center; font-size: 14px; white-space: nowrap; }
.tray svg { flex: none; }
.lang { width: 20px; height: 20px; margin: 0 13px; background: #dfdbd2; color: #45443f; border-radius: 2px; font-size: 12.5px; line-height: 20px; text-align: center; letter-spacing: -.5px; }
.tray-vol { margin: 0 12px 0 12px; }
.clock { width: 155px; }
.tray-cog { margin: 0 6px 0 12px; }
.user { width: 51px; }

.desktop { flex: 1; display: flex; min-height: 0; }
.launcher { width: 65px; flex: none; background: linear-gradient(90deg, #39241e, #452e28 12px, #432c26); border-right: 1px solid #96604f; padding: 6px 0 0 6px; display: flex; flex-direction: column; gap: 7px; position: relative; }
.tile { width: 52px; height: 52px; flex: none; border-radius: 4px; border: 1px solid #705e58; background: radial-gradient(ellipse at 50% 0, #8c7c76, #5a4640 55%, #503b35); }
.tile svg { display: block; width: 52px; height: 52px; margin: -1px; }
.t-dash { background: linear-gradient(#a88579, #8c6257); border-color: #b09287; }
.t-light { background: linear-gradient(#aaa, #c9c9c9); border-color: #ccc; }
.t-orange { background: linear-gradient(#c1a078, #a87c3c); border-color: #c49d62; }
.t-trash { margin-top: 104px; }
.pip { position: absolute; width: 5px; height: 8px; background: #ddd; }
.pip-l { left: 0; clip-path: polygon(0 0, 100% 50%, 0 100%); }
.p1 { top: 205px; }
.p2 { top: 675px; height: 11px; clip-path: none; background: repeating-linear-gradient(#ddd 0 3px, transparent 3px 4px); }
.pip-r { right: 0; top: 677px; clip-path: polygon(100% 0, 0 50%, 100% 100%); }

.app { flex: 1; display: flex; flex-direction: column; }
.menubar { height: 20px; flex: none; list-style: none; display: flex; gap: 14.6px; padding: 3px 0 0 10.5px; background: #efebe7; border-bottom: 1px solid #d2cdc7; }
u { text-underline-offset: 2px; }
.work { flex: 1; display: flex; }
.canvas { display: block; background: #fff; }
.dock { width: 273px; display: flex; flex-direction: column; border-right: 1px solid #b9bdbf; background: #f4f4f4; }
.dock-head { height: 17px; margin-right: 1px; background: linear-gradient(#7d7d7d, #666); display: flex; align-items: center; justify-content: flex-end; padding-right: 3px; }
.toolbox { height: 654px; border-left: 1px solid #b5b5b5; border-top: 2px solid #b5b5b5; display: flex; }
.cats { width: 257px; background: #efebe7; border-right: 1px solid #b5b5b5; }
.cat { height: 30px; border-bottom: 1px solid #b0b0b0; background: linear-gradient(#f3f3f3 55%, #e4e4e4); font: bold 14px/30px "Liberation Sans", Arial, sans-serif; color: #333; display: flex; gap: 9px; }
.c-data, .c-eval { height: 29px; line-height: 28px; }
.cico { width: 38px; border-right: 1px solid #b5b5b5; display: flex; }
.cico svg { width: 38px; height: 100%; }
.c-data .cico { background: linear-gradient(#ffd39f, #f0c58f); }
.c-vis .cico { background: linear-gradient(#ffb7b2, #efa9a4); }
.c-model { background: linear-gradient(#fac1da 55%, #edb3cc); color: #000; }
.c-model .cico { border-color: transparent; }
.c-eval .cico { background: linear-gradient(#c5f4f3, #b5e5e4); }
.c-uns .cico { background: linear-gradient(#cde2f0, #bcd2e1); }
.widgets { height: 345px; background: #f2f2f2; border-bottom: 1px solid #b0b0b0; padding-top: 2px; display: grid; grid-template-columns: repeat(4, 64px); grid-auto-rows: 84px; align-content: start; }
.wg { display: flex; flex-direction: column; align-items: center; color: #3c3c3c; text-align: center; padding-top: 1px; }
.wg svg { width: 48px; height: 48px; flex: none; overflow: visible; }
.wg p { flex: none; height: 34px; line-height: 14px; display: flex; align-items: center; white-space: nowrap; }
.scroll { width: 14px; background: linear-gradient(90deg, #f4f2f0, #fff); display: flex; flex-direction: column; justify-content: space-between; }
.sb { height: 14px; display: flex; align-items: center; justify-content: center; border-bottom: 1px solid #b5b5b5; }
.sb + .sb { border-bottom: 0; border-top: 1px solid #b5b5b5; }
.tri { display: inline-block; width: 8px; height: 4px; background: #555; clip-path: polygon(0 0, 100% 0, 50% 100%); flex: none; }
.tri.up { clip-path: polygon(50% 0, 100% 100%, 0 100%); }
.splitter { height: 8px; border: solid #b5b5b5; border-width: 2px 0; background: #f4f4f4; }
.info { height: 148px; background: #fff; border-left: 1px solid #b5b5b5; border-bottom: 1px solid #b5b5b5; padding: 5px 4px; color: #222; line-height: 15px; }
.info h3 { font-size: 14px; letter-spacing: -.05px; line-height: 15px; color: #ffa500; margin-bottom: 14px; }
.info a { display: inline-block; margin-top: 12px; color: #ffa500; border-bottom: 1px solid #ffa500; line-height: 14px; }
.dock-tools { height: 29px; display: grid; grid-template-columns: 46px 46px 46px 45px 45px 44px; background: linear-gradient(#7c7c7c, #666); border-bottom: 2px solid #888; }
.dt { display: flex; align-items: center; justify-content: center; border-right: 1px solid #9c9c9c; color: #fff; position: relative; }
.shift { padding-right: 2px; }
.dt .tri { position: absolute; right: 2px; top: 3px; width: 6px; background: #fff; }
.dt.serif-t .tri { right: 3px; }
.serif-i, .serif-t { font-family: "DejaVu Serif", serif; font-weight: 700; font-size: 18px; }
.serif-t { font-size: 25px; padding-right: 1px; }
.help { background: #ffa63e; border: 0; }

.link path { fill: none; stroke: #9caeb6; stroke-width: 1.9; }
.dots { fill: #9caeb6; }
.nd { stroke: #e4eaed; stroke-width: 1; }
.sel { filter: drop-shadow(0 0 3px #8b9aa3); stroke: none; }
.ltext, .nlabel { font: 12px "Liberation Sans", Arial, sans-serif; fill: #111; }
.nlabel { text-anchor: middle; }
.on { fill: #fff; }

.win { position: absolute; z-index: 3; background: #efebe7; border-radius: 6px 6px 0 0; box-shadow: 1px 2px 4px rgba(0,0,0,.7); }
.score { left: 345px; top: 43px; width: 780px; height: 481px; }
.nnet { left: 1178px; top: 416px; width: 322px; height: 375px; z-index: 4; box-shadow: 1px 1px 5px rgba(0,0,0,.6); }
.titlebar { height: 28px; border-radius: 6px 6px 0 0; background: linear-gradient(#5a584f, #403f3a); color: #dfdbd2; display: flex; align-items: center; padding-left: 7px; gap: 12px; font: 700 14px "Noto Sans", sans-serif; letter-spacing: -.15px; }
.titlebar.off { background: linear-gradient(#464541, #3c3b37); color: #807d78; padding-left: 8px; gap: 11px; letter-spacing: .25px; }
.score-body { display: flex; height: 453px; padding: 0 8px 0 5px; }
.left { width: 210px; display: flex; flex-direction: column; }
.right { margin-left: 5px; width: 552px; display: flex; flex-direction: column; }
.cap { display: block; height: 23px; padding: 6px 0 0 3px; flex: none; }
.left .cap { padding-left: 2.5px; }
.right .cap { height: 27px; padding-top: 10px; }
.left .cap-target { height: 31px; padding-top: 14px; }
.group { border: 1px solid #d6d2cd; border-radius: 2px; background: #ebe7e3; flex: none; }
.sampling { height: 323px; padding: 6px 9px 0 8px; display: grid; grid-template-rows: 25px 27px 25px 26px 25px 27px 25px 29px 23px 26px 25px 25px; }
.row { display: flex; align-items: center; gap: 6px; white-space: nowrap; }
.row .combo:not(.full) { margin-left: auto; }
.sub { padding-left: 20px; gap: 5px; }
.dis { color: #bebab6; }
.dis .tri { background: #d5d2ce; }
.dis .combo { border-color: #c5c1bc; }
.radio { width: 14px; height: 14px; border: 1px solid #9b9792; border-radius: 50%; background: #fff; flex: none; }
.radio.on { background: radial-gradient(#3a3a3a 2.8px, #fff 3.6px); }
.dis .radio { background: #f0edea; border-color: #bbb7b2; }
.check { width: 14px; height: 14px; border: 1px solid #a5a19c; background: #fff; flex: none; }
.check svg { display: block; width: 14px; height: 14px; margin: -1px; }
.combo, .button { height: 23px; border: 1px solid #a9a5a0; border-radius: 3px; background: linear-gradient(#fdfcfb, #ebe8e4); display: flex; align-items: center; justify-content: space-between; padding: 0 6px 0 4px; flex: none; color: #111; }
.combo .tri { margin-left: auto; }
.full { width: 100%; }
.sub .full { width: 171px; }
.w63 { width: 63px; } .w57 { width: 57px; } .w60 { width: 60px; } .w141 { width: 141px; } .w125 { width: 125px; }
.focus { border-color: #2f6e98; }
.target { height: 43px; padding: 8px 9px 0 8px; }
.target .combo { height: 24px; padding-top: 1px; }
.foot { display: flex; gap: 8px; margin: 15px 0 0 -2px; }
.q { width: 14px; height: 14px; border: 1px solid #666; color: #555; font: bold 12px/12px "DejaVu Sans", sans-serif; text-align: center; }
.results { height: 390px; padding: 8px; }
.tablebox { width: 533px; height: 370px; border: 1px solid #aca8a3; background: linear-gradient(#efebe7 19px, #fff 19px); }
table { border-collapse: separate; border-spacing: 0; table-layout: fixed; width: 442px; }
.c1 { width: 148px; } .c2 { width: 53px; } .c3 { width: 45px; } .c4 { width: 42px; } .c5 { width: 88px; } .c6 { width: 66px; }
th { height: 19px; padding: 2px 0 0; font-weight: 400; line-height: 14px; background: linear-gradient(#f9f7f5, #ece9e5); border-right: 1px solid #c5c1bc; border-bottom: 1px solid #a9a5a0; }
th:last-child { border-right: 0; }
.sorted .tri { width: 7px; margin-left: 9px; vertical-align: 3px; }
td { height: 21px; padding: 0 0 0 3px; line-height: 14px; white-space: nowrap; }
tbody tr:nth-child(even) { background: #f6f5f4; }
.grip { position: absolute; right: 1px; bottom: 1px; }
.handle { position: absolute; left: 217px; top: 237px; width: 1px; height: 18px; background: repeating-linear-gradient(#aaa 0 1px, transparent 1px 3px); }

.nn-body { padding: 0 8px 0 9px; display: flex; flex-direction: column; }
.nn-body .cap { height: 27px; padding-top: 10px; }
.name { height: 42px; padding: 8px 9px 0 8px; }
.field { display: block; height: 23px; border: 1px solid #a9a5a0; border-radius: 3px; background: #fff; padding: 0 2px; line-height: 22px; }
.nn-body .cap-net { height: 23px; padding-top: 6px; }
.net { height: 152px; padding: 6px 9px 0 8px; }
.frow { height: 27px; display: flex; align-items: center; justify-content: space-between; }
.tall { height: 28px; }
.spin { width: 80px; height: 22px; border: 1px solid #a9a5a0; border-radius: 3px; background: #fff; display: flex; }
.spin b { flex: 1; font-weight: 400; text-align: right; line-height: 21px; padding-right: 7px; }
.spin span { width: 14px; border-left: 1px solid #a9a5a0; background: #f4f2f0; display: flex; flex-direction: column; align-items: center; justify-content: center; gap: 5px; }
.apply { height: 43px; margin-top: 31px; padding: 0 9px 1px 8px; display: flex; align-items: center; justify-content: space-between; }
.button { width: 258px; height: 24px; justify-content: center; color: #bdb9b5; border-color: #c0bcb7; }
.nn-body .foot { margin: 11px 0 0 -6px; }
```
